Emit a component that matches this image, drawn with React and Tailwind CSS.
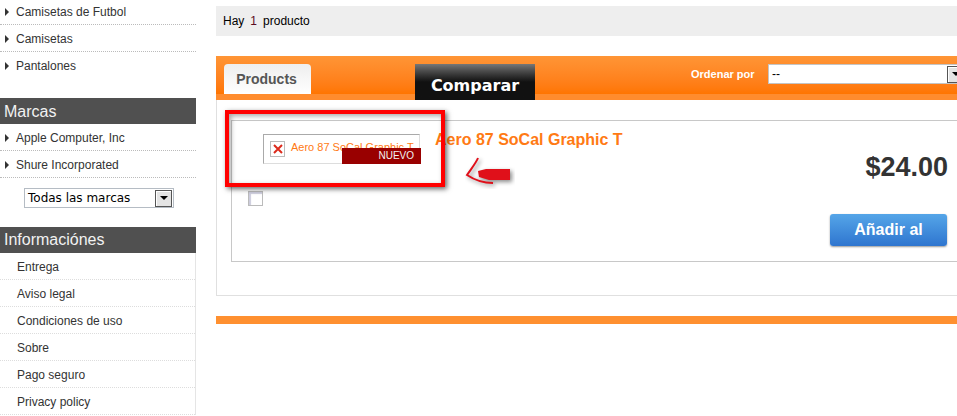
const categories = ["Camisetas de Futbol", "Camisetas", "Pantalones"];
const brands = ["Apple Computer, Inc", "Shure Incorporated"];
const info = ["Entrega", "Aviso legal", "Condiciones de uso", "Sobre", "Pago seguro", "Privacy policy"];

function Caret() {
  return <span className="w-0 h-0 mr-[7px] ml-[5px] border-y-[4px] border-y-transparent border-l-[4px] border-l-[#333]" />;
}

function ArrowButton() {
  return (
    <span className="flex items-center justify-center w-[17px] h-[17px] shrink-0 bg-[#e4e4e4] border border-[#555] shadow-[inset_1px_1px_0_#fff]">
      <span className="w-0 h-0 border-x-[4px] border-x-transparent border-t-[4px] border-t-black" />
    </span>
  );
}

function LinkRow({ label, line = true }) {
  return (
    <div className={`flex items-center h-[27px] ${line ? "pt-[2px] border-b border-dotted border-[#bbb]" : ""}`}>
      <Caret />
      <span>{label}</span>
    </div>
  );
}

function Heading({ children, tall }) {
  return <div className={`h-[26px] bg-[#505050] text-[#f2f2f2] text-[16px] pl-[4px] ${tall ? "leading-[28px]" : "leading-[26px]"}`}>{children}</div>;
}

export default function App() {
  return (
    <div className="relative flex w-[957px] h-[416px] overflow-hidden bg-white text-[12px] text-[#333] font-['Liberation_Sans',Arial,sans-serif]">
      <aside className="w-[196px] shrink-0">
        <div className="-mt-[2px] h-[100px]">
          <LinkRow label={categories[0]} />
          <LinkRow label={categories[1]} />
          <LinkRow label={categories[2]} line={false} />
        </div>
        <Heading tall>Marcas</Heading>
        <LinkRow label={brands[0]} />
        <LinkRow label={brands[1]} />
        <div className="mt-[10px] ml-[24px] w-[150px] h-[20px] flex items-center justify-between border border-[#b5bcc4] pl-[3px] pr-[1px] font-['DejaVu_Sans',sans-serif] text-[12px] text-black">
          <span>Todas las marcas</span>
          <ArrowButton />
        </div>
        <div className="mt-[19px]">
          <Heading>Informaciónes</Heading>
        </div>
        <div className="border-r border-[#e5e5e5]">
          {info.map((t) => (
            <div key={t} className="h-[27px] pl-[17px] pt-[2px] flex items-center border-b border-dotted border-[#ddd]">{t}</div>
          ))}
        </div>
      </aside>

      <main className="ml-[20px] flex-1 min-w-0 pt-[6px]">
        <div className="h-[30px] bg-[#eeeeee] pl-[7px] flex items-center gap-[6px] text-[12px] text-black">
          <span>Hay</span>
          <span className="text-[#5a0a20]">1</span>
          <span>producto</span>
        </div>

        <div className="relative mt-[20px] h-[44px] bg-[#ff8c2e]">
          <div className="h-[38px] pt-[8px] pl-[8px] flex bg-gradient-to-b from-[#ff9535] to-[#ff7500]">
            <div className="w-[87px] shrink-0 h-[30px] pr-[2px] rounded-t-[4px] bg-gradient-to-b from-[#eeeeee] to-white text-[#555] text-[14px] font-bold flex items-center justify-center">Products</div>
            <div className="ml-[104px] w-[120px] shrink-0 h-[36px] bg-gradient-to-b from-[#777] from-0% via-[#111] via-50% to-[#111] text-white text-[16px] font-bold font-['DejaVu_Sans',sans-serif] flex items-end justify-center pb-[2px]">Comparar</div>
            <div className="ml-[156px] shrink-0 w-[64px] whitespace-nowrap mt-[3px] text-white text-[11px] font-bold leading-[14px]">Ordenar por</div>
            <div className="ml-[13px] w-[197px] h-[20px] shrink-0 bg-white border border-[#c4c4c4] flex items-center justify-between pl-[3px] text-black text-[12px]">
              <span>--</span>
              <ArrowButton />
            </div>
          </div>
        </div>

        <div className="h-[196px] border-l border-b border-[#e0e0e0] pt-[20px] pl-[14px]">
          <div className="h-[142px] border-l border-t border-b border-[#c8c8c8] flex">
            <div className="w-[203px] shrink-0 pl-[16px] pt-[13px]">
              <div className="relative ml-[15px] w-[157px] h-[30px] border-l border-t border-b border-r border-l-[#aaa] border-t-[#aaa] border-b-[#ddd] border-r-[#ddd] flex items-center pl-[6px] gap-[6px] text-[11px] text-[#ff7a14]">
                <span className="flex items-center justify-center w-[15px] h-[16px] border border-[#bbb] shrink-0">
                  <svg width="10" height="10" viewBox="0 0 10 10"><path d="M1 1L9 9M9 1L1 9" stroke="#dc2a1c" strokeWidth="2" /></svg>
                </span>
                <span className="whitespace-nowrap -mt-[4px]">Aero 87 SoCal Graphic T</span>
                <span className="absolute left-[78px] top-[13px] w-[79px] h-[16px] bg-[#990000] text-[#f2f2f2] text-[10px] leading-[16px] text-right pr-[7px]">NUEVO</span>
              </div>
              <div className="mt-[27px] w-[15px] h-[15px] border border-[#bbb] bg-white shadow-[inset_2px_2px_1px_#ccd]" />
            </div>
            <div className="flex-1 relative pt-[9px]">
              <div className="text-[16px] font-bold text-[#ff7a14] leading-[19px]">Aero 87 SoCal Graphic T</div>
              <div className="mr-[9px] mt-[2px] text-right text-[27px] font-bold leading-[32px] text-[#333]">$24.00</div>
              <div className="ml-[395px] mt-[31px] w-[117px] h-[32px] rounded-[3px] bg-gradient-to-b from-[#55a5e8] to-[#2f75cf] shadow-[0_1px_2px_#999] text-white text-[16px] font-bold flex items-center justify-center">Añadir al</div>
            </div>
          </div>
        </div>

        <div className="mt-[20px] h-[8px] bg-[#ff9030]" />
      </main>

      <div className="absolute left-[225px] top-[110px] w-[220px] h-[77px] border-[4px] border-[#ff0000] shadow-[2px_2px_5px_rgba(0,0,0,0.6),inset_2px_2px_5px_rgba(0,0,0,0.35)]" />
      <svg className="absolute left-[465px] top-[155px]" width="50" height="34" viewBox="0 0 50 34">
        <g filter="drop-shadow(2px 2px 2px rgba(0,0,0,0.45))">
          <path d="M13 3C11 8 6 14 2 20C8 24 18 28 28 28" fill="none" stroke="#e0101a" strokeWidth="2" />
          <path d="M13 16L21 14H45V25H24L14 22Z" fill="#e0101a" />
        </g>
      </svg>
    </div>
  );
}
